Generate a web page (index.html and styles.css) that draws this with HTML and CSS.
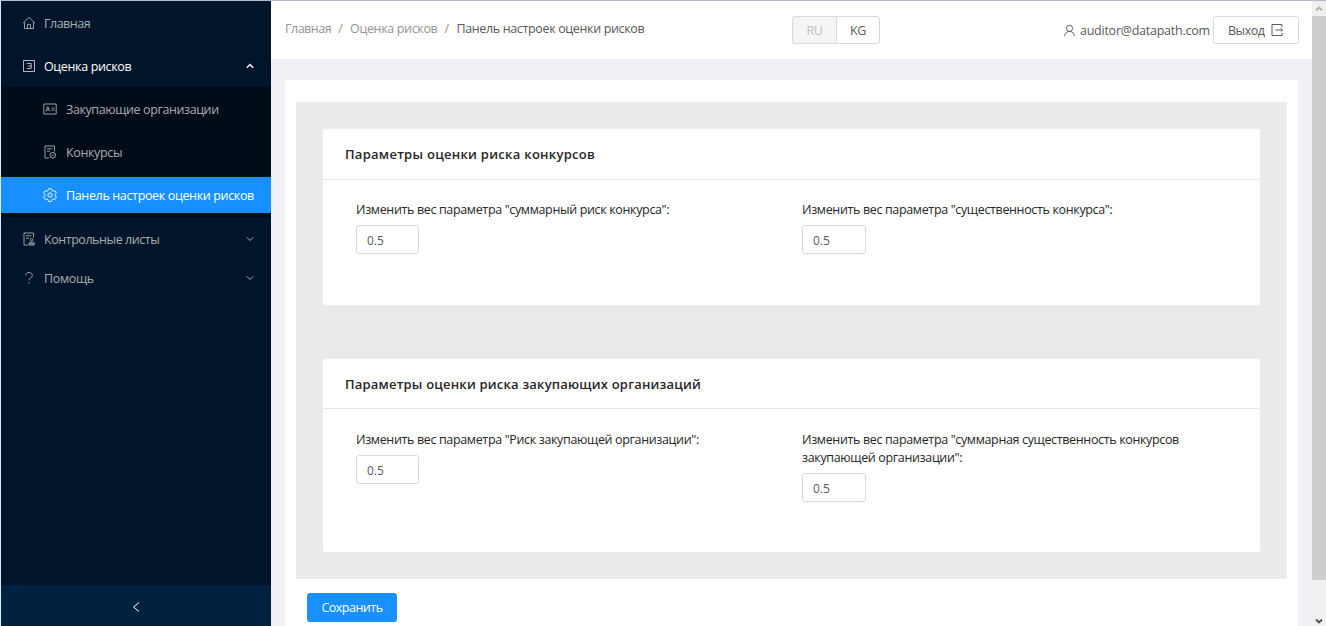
FILE: index.html
```html
<!DOCTYPE html>
<html lang="ru">
<head>
<meta charset="utf-8">
<title>Панель настроек оценки рисков</title>
<link rel="stylesheet" href="styles.css">
</head>
<body>
<div class="app">
  <aside class="sidebar">
    <nav class="menu">
      <a class="item home"><svg class="icon" viewBox="0 0 14 14"><path d="M1 7.2 7 1.3l6 5.9M2.5 6.2v6.3h9V6.2M5.5 12.5V8.4h3v4.1"/></svg><span class="t-home">Главная</span></a>
      <a class="item open"><svg class="icon" viewBox="0 0 14 14"><path d="M1.5 1.5h11v11h-11zM4.800 4.500h4.400v5H4.800M6 7h3.200"/></svg><span class="t-risk">Оценка рисков</span><svg class="arrow" viewBox="0 0 8 8"><path d="M.8 5.700 4 2.500l3.200 3.200"/></svg></a>
      <div class="submenu">
        <a class="item"><svg class="icon" viewBox="0 0 14 14"><path d="M.8 2h12.400v10H.8zM3 9.300l1.500-4.500h.6l1.400 4.500M3.600 7.800h2.300M8.500 6.200h3M8.500 8.200h3"/></svg><span class="t-org">Закупающие организации</span></a>
        <a class="item"><svg class="icon" viewBox="0 0 14 14"><path d="M6 13H2V1h9.500v5.500M4 3.800h5.500M4 6.200h3"/><circle cx="9.800" cy="10.200" r="2.800"/><path d="m8.600 10.200.9.900 1.500-1.800"/></svg><span class="t-tend">Конкурсы</span></a>
        <a class="item active"><svg class="icon" viewBox="0 0 14 14"><path d="m5.400 1 .4-.3h2.400l.4.3.4 1.600 1 .6 1.700-.5.4.2 1.200 2.100-.1.5L12 6.600v1l1.200 1.100.1.500-1.200 2.100-.4.2-1.700-.5-1 .6-.4 1.600-.4.3H5.800l-.4-.3L5 11.600 4 11l-1.700.5-.4-.2L.7 9.200l.1-.5L2 7.600v-1L.8 5.500.7 5l1.200-2.100.4-.2L4 3.200l1-.6z"/><circle cx="7" cy="7" r="2.100"/></svg><span class="t-panel">Панель настроек оценки рисков</span></a>
      </div>
      <a class="item lists"><svg class="icon" viewBox="0 0 14 14"><path d="M6 13H2V1h9.500v4.500M4 3.800h5.500M4 6.200h3"/><circle cx="9.600" cy="7.800" r="1.300"/><path d="M9.600 9.200v1.200M7 13v-2.200h5.200V13zM7 12h5"/></svg><span class="t-list">Контрольные листы</span><svg class="arrow" viewBox="0 0 8 8"><path d="M.8 2.300 4 5.500l3.200-3.200"/></svg></a>
      <a class="item help"><svg class="icon" viewBox="0 0 14 14"><path d="M3.700 4.500C3.700 2.500 5.100 1.500 7 1.500s3.300 1.100 3.300 2.900C10.300 7 7 6.800 7 9.300M7 11.300v1.400"/></svg><span class="t-help">Помощь</span><svg class="arrow" viewBox="0 0 8 8"><path d="M.8 2.300 4 5.500l3.200-3.200"/></svg></a>
    </nav>
    <div class="collapse"><svg viewBox="0 0 8 12"><path d="M7 1.500 1.500 6 7 10.500"/></svg></div>
  </aside>
  <div class="main">
    <header class="header">
      <div class="crumbs"><span class="b-home">Главная</span><i>/</i><span class="b-risk">Оценка рисков</span><i>/</i><span class="b-panel">Панель настроек оценки рисков</span></div>
      <div class="langs"><button class="lang off">RU</button><button class="lang">KG</button></div>
      <div class="user"><svg class="person" viewBox="0 0 14 14"><circle cx="7" cy="4.700" r="3.300"/><path d="M1.600 13c.2-2.900 2.300-5 5.400-5s5.200 2.100 5.400 5"/></svg><span class="mail">auditor@datapath.com</span><button class="exit"><span>Выход</span><svg viewBox="0 0 14 14"><path d="M12 4V1.500H2v11h10V10M5.500 7h7M10.800 5.300 12.500 7l-1.700 1.700"/></svg></button></div>
    </header>
    <main class="content">
      <div class="panel">
        <section class="card first">
          <h2><span class="h-a">Параметры оценки риска конкурсов</span></h2>
          <div class="fields">
            <label><span class="l-a">Изменить вес параметра "суммарный риск конкурса":</span><input class="narrow" value="0.5"></label>
            <label><span class="l-b">Изменить вес параметра "существенность конкурса":</span><input value="0.5"></label>
          </div>
        </section>
        <section class="card second">
          <h2><span class="h-b">Параметры оценки риска закупающих организаций</span></h2>
          <div class="fields">
            <label><span class="l-c">Изменить вес параметра "Риск закупающей организации":</span><input class="narrow" value="0.5"></label>
            <label><span class="l-d">Изменить вес параметра "суммарная существенность конкурсов<br>закупающей организации":</span><input value="0.5"></label>
          </div>
        </section>
      </div>
      <button class="save">Сохранить</button>
    </main>
  </div>
  <div class="scrollbar">
    <div class="up"><svg viewBox="0 0 8 6"><path d="m1 4.500 3-3 3 3"/></svg></div>
    <div class="thumb"></div>
    <div class="down"><svg viewBox="0 0 8 6"><path d="m1 1.500 3 3 3-3"/></svg></div>
  </div>
</div>
</body>
</html>
```
FILE: styles.css
```css
* { box-sizing: border-box; }
body { margin: 0; overflow: hidden; font: 12.5px/18px "Open Sans", "Noto Sans", sans-serif; color: #262626; }
button, input { font: inherit; margin: 0; }
svg { fill: none; stroke: currentColor; flex: none; }
span { white-space: nowrap; letter-spacing: -.35px; }
.app { display: flex; width: 1326px; height: 626px; border-top: 1px solid #b1bdca; overflow: hidden; }

.sidebar { display: flex; flex-direction: column; width: 271px; flex: none; border-left: 1px solid #dcebf3; background: #001529; color: #a6adb4; }
.menu { flex: 1; }
.item { display: flex; align-items: center; height: 36px; padding: 0 17px 0 21px; }
.item span { padding-top: 2px; }
.icon { width: 14px; height: 14px; margin-right: 8px; stroke-width: .9; }
.arrow { width: 8px; height: 8px; margin-left: auto; stroke-width: 1; }
.home { margin-top: 4px; }
.open { margin-top: 7px; color: #fff; }
.open .icon { color: #c4cad0; }
.open .arrow { stroke-width: 1.3; }
.submenu { display: flex; flex-direction: column; gap: 7px; margin-top: 3px; height: 130px; padding: 4px 0; background: #000c17; }
.submenu .item { padding: 0 0 0 43px; }
.submenu .icon { margin-left: -1px; }
.submenu span { margin-left: 1px; }
.item.active { background: #1890ff; color: #fff; }
.t-home { letter-spacing: -.5px; }
.t-org { letter-spacing: -.4px; }
.t-list { letter-spacing: -.45px; }
.lists { margin-top: 4px; }
.help { margin-top: 3px; }
.collapse { display: flex; align-items: center; justify-content: center; height: 41px; padding-top: 2px; background: #002140; color: #fff; }
.collapse svg { width: 8px; height: 12px; }

.main { width: 1041px; flex: none; background: #f0f1f6; }
.header { display: flex; height: 58px; padding: 0 13px 0 14px; background: #fff; }
.crumbs { display: flex; width: 507px; padding-top: 19px; color: #949494; }
.crumbs i { font-style: normal; width: 19px; text-align: center; }
.b-home { letter-spacing: -.5px; }
.b-panel { color: #595959; }
.langs { display: flex; padding-top: 15px; }
.lang { width: 44px; height: 28px; padding: 1px 0 0; border: 1px solid #d9d9d9; border-radius: 0 3px 3px 0; background: #fff; color: #595959; letter-spacing: -.3px; }
.lang.off { width: 45px; margin-right: -1px; border-radius: 3px 0 0 3px; background: #f5f5f5; color: #bfbfbf; }
.user { display: flex; align-items: center; height: 28px; margin: 15px 0 0 auto; color: #595959; }
.person { width: 13px; height: 13px; margin-right: 4px; }
.mail { width: 129px; margin-right: 4px; padding-top: 2px; letter-spacing: -.25px; }
.exit { display: flex; align-items: center; justify-content: space-between; width: 86px; height: 28px; padding: 0 14px; border: 1px solid #d9d9d9; border-radius: 3px; background: #fff; color: #595959; }
.exit span { padding-top: 2px; letter-spacing: -.5px; }
.exit svg { width: 14px; height: 14px; }

.content { margin: 21px 14px 0; height: 546px; padding: 22px 11px 0; background: #fff; }
.panel { height: 477px; padding: 27px; background: #ebebeb; }
.card { width: 937px; border-radius: 2px; background: #fff; }
.first { height: 176px; }
.second { height: 193px; margin-top: 54px; }
h2 { height: 51px; margin: 0; padding: 16px 22px 0; border-bottom: 1px solid #e8e8e8; font-size: 13px; line-height: 18px; font-weight: 600; }
h2 .h-a { letter-spacing: .28px; }
h2 .h-b { letter-spacing: .2px; }
.second h2 { height: 50px; }
.fields { display: grid; grid-template-columns: 446px 1fr; padding: 21px 33px 0; }
.second .fields { padding-top: 22px; }
label { display: flex; flex-direction: column; align-items: flex-start; gap: 6px; }
input { width: 64px; height: 29px; padding: 1px 10px 0; border: 1px solid #d9d9d9; border-radius: 3px; background: #fff; color: #595959; font-size: 12px; outline: 0; }
.narrow { width: 63px; }
.save { width: 90px; height: 29px; margin: 14px 0 0 11px; padding: 0; border: 0; border-radius: 3px; background: #1890ff; color: #fff; letter-spacing: -.5px; }

.scrollbar { display: flex; flex-direction: column; width: 14px; flex: none; background: #f0f0f0; }
.up { height: 15px; display: flex; align-items: center; justify-content: center; color: #b0b0b0; }
.thumb { height: 564px; background: #cdcdcd; }
.down { flex: 1; display: flex; align-items: flex-end; justify-content: center; padding-bottom: 2px; color: #505050; }
.scrollbar svg { width: 8px; height: 6px; stroke-width: 1.8; }
```
